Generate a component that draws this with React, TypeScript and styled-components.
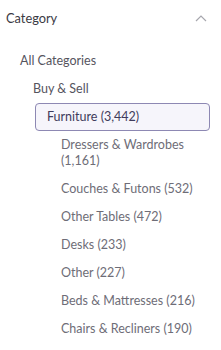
import React from 'react';
import styled, { createGlobalStyle } from 'styled-components';

const GlobalStyle = createGlobalStyle`
  html, body {
    margin: 0;
    padding: 0;
    background: #ffffff;
  }
  body {
    font-family: Lato, "Noto Sans", sans-serif;
    -webkit-font-smoothing: antialiased;
  }
`;

const Panel = styled.div`
  width: 221px;
  padding: 0 11px 0 6px;
  box-sizing: border-box;
`;

const Header = styled.div`
  height: 36px;
  display: flex;
  align-items: center;
  justify-content: space-between;
  margin-bottom: 11px;
`;

const Title = styled.span`
  font-size: 12.8px;
  color: #3b3a44;
`;

const Chevron = styled.svg`
  margin-right: 3px;
  color: #a7a7ae;
`;

const List = styled.ul`
  list-style: none;
  margin: 0;
  padding: 0;
`;

const Item = styled.li<{ level: number; active?: boolean }>`
  box-sizing: border-box;
  font-size: 12.5px;
  line-height: 16px;
  padding: 6px 4px 6px ${({ level, active }) => (active ? 11 : [14, 27, 41, 55][level])}px;
  margin-left: ${({ active }) => (active ? 29 : 0)}px;
  color: ${({ level, active }) => (active ? '#3f3c5c' : level < 2 ? '#55545e' : '#6e6d77')};
  border: ${({ active }) => (active ? '1px solid #8d88b3' : 'none')};
  border-radius: 4px;
  background: ${({ active }) => (active ? '#f6f5fb' : 'transparent')};
  ${({ active }) => active && 'padding-top: 5px; padding-bottom: 5px;'}
`;

const items: { label: string; level: number; active?: boolean }[] = [
  { label: 'All Categories', level: 0 },
  { label: 'Buy & Sell', level: 1 },
  { label: 'Furniture (3,442)', level: 2, active: true },
  { label: 'Dressers & Wardrobes (1,161)', level: 3 },
  { label: 'Couches & Futons (532)', level: 3 },
  { label: 'Other Tables (472)', level: 3 },
  { label: 'Desks (233)', level: 3 },
  { label: 'Other (227)', level: 3 },
  { label: 'Beds & Mattresses (216)', level: 3 },
  { label: 'Chairs & Recliners (190)', level: 3 },
];

export default function App() {
  return (
    <>
      <GlobalStyle />
      <Panel>
        <Header>
          <Title>Category</Title>
          <Chevron width="12" height="8" viewBox="0 0 12 8" fill="none">
            <polyline points="1,7 6,2 11,7" stroke="currentColor" strokeWidth="1.2" />
          </Chevron>
        </Header>
        <List>
          {items.map((it) => (
            <Item key={it.label} level={it.level} active={it.active}>
              {it.label}
            </Item>
          ))}
        </List>
      </Panel>
    </>
  );
}
